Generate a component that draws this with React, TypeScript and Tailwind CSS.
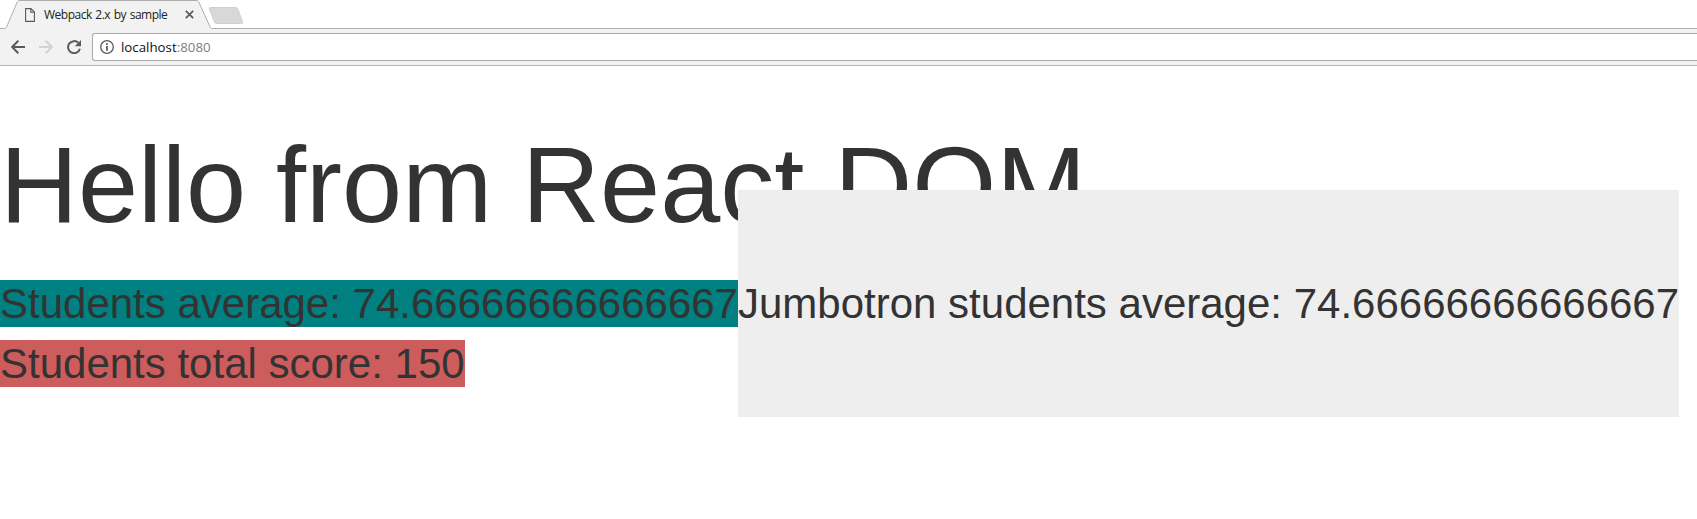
import React from "react";

const average = 74.66666666666667;
const totalScore = 150;

function TabStrip() {
  return (
    <div className="relative flex h-[29px] items-start bg-white">
      <svg className="absolute inset-0 h-[29px] w-full" width="1697" height="29" aria-hidden="true">
        <path d="M-1 28.5H4.500C5.800 28.500 6.300 27.700 6.900 26.300L17 2.500C17.600 1 18.500 .5 20 .5H196C197.500 .5 198.300 1 199 2.500L209.800 26.300C210.500 27.800 211 28.500 212.500 28.500H1698V30H-1Z" fill="#f2f2f2" stroke="#adadad" />
        <path d="M210.500 7.500H235C236.500 7.500 237.300 8 238 9.500L242.500 21.500C243 23 242.500 23.500 241.500 23.500H217C215.500 23.500 214.800 23 214.200 21.500L209.500 9.500C209 8 209.300 7.500 210.500 7.500Z" fill="#d8d8d8" stroke="#d0d0d0" />
      </svg>
      <div className="relative flex h-[29px] w-[212px] items-center pl-[25px]">
        <svg className="shrink-0" width="10" height="14" viewBox="0 0 10 14" fill="none" stroke="#5a5a5a" strokeWidth="1.1">
          <path d="M.6 .6H6L9.400 4V13.400H.6Z M5.800 .8V4.200H9.200" />
        </svg>
        <span className="ml-[9px] w-[125px] whitespace-nowrap font-['Open_Sans',sans-serif] text-[12px] leading-[16px] tracking-[-0.5px] text-[#222] [word-spacing:1px]">
          Webpack 2.x by sample
        </span>
        <svg className="ml-[16px] shrink-0" width="9" height="9" viewBox="0 0 9 9" stroke="#5a5a5a" strokeWidth="1.7">
          <path d="M.8 .8L8.200 8.200M8.200 .8L.8 8.200" />
        </svg>
      </div>
    </div>
  );
}

function Toolbar() {
  return (
    <div className="flex h-[37px] items-center border-b border-[#b5b5b5] bg-[#f2f2f2] pl-[11px]">
      <svg className="shrink-0" width="14" height="14" viewBox="0 0 14 14" fill="none" stroke="#5a5a5a" strokeWidth="2">
        <path d="M14 7H1.500M7.300 .8L1.200 7L7.300 13.200" />
      </svg>
      <svg className="ml-[14px] shrink-0" width="14" height="14" viewBox="0 0 14 14" fill="none" stroke="#d2d2d2" strokeWidth="2">
        <path d="M0 7H12.500M6.700 .8L12.800 7L6.700 13.200" />
      </svg>
      <svg className="ml-[14px] shrink-0" width="14" height="14" viewBox="0 0 14 14">
        <path d="M12.900 8.700A6 6 0 1 1 11.300 2.800" fill="none" stroke="#5a5a5a" strokeWidth="2" />
        <path d="M14 0V6.200H7.800Z" fill="#5a5a5a" />
      </svg>
      <div className="ml-[11px] flex h-[28px] flex-1 items-center rounded-l-[3px] border border-r-0 border-[#a9a9a9] bg-white pl-[7px]">
        <svg className="shrink-0" width="14" height="14" viewBox="0 0 14 14">
          <circle cx="7" cy="7" r="6.300" fill="none" stroke="#5a5a5a" strokeWidth="1.3" />
          <path d="M6.100 3.200H7.900V4.900H6.100ZM6.100 6.100H7.900V10.800H6.100Z" fill="#5a5a5a" />
        </svg>
        <span className="ml-[7px] whitespace-nowrap font-['Open_Sans',sans-serif] text-[13.3px] leading-[18px] text-[#111]">
          localhost<span className="text-[#808080]">:8080</span>
        </span>
      </div>
    </div>
  );
}

export default function App() {
  return (
    <div className="flex h-[519px] w-full flex-col overflow-hidden bg-white">
      <TabStrip />
      <Toolbar />
      <main className="font-['Liberation_Sans',Arial,sans-serif] text-[42px] leading-[47px] text-[#333]">
        <h1 className="mt-[59px] h-[119px] whitespace-nowrap text-[108px] leading-[119px] font-normal">
          Hello from React DOM
        </h1>
        <div className="mt-[-54px] flex items-center">
          <span className="h-[47px] w-[738px] shrink-0 whitespace-nowrap bg-[#008080]">
            Students average: {average}
          </span>
          <span className="relative w-[941px] shrink-0 whitespace-nowrap bg-[#eee] py-[90px]">
            Jumbotron students average: {average}
          </span>
        </div>
        <div className="relative mt-[-77px] flex">
          <span className="h-[47px] w-[465px] whitespace-nowrap bg-[#cd5c5c]">
            Students total score: {totalScore}
          </span>
        </div>
      </main>
    </div>
  );
}
